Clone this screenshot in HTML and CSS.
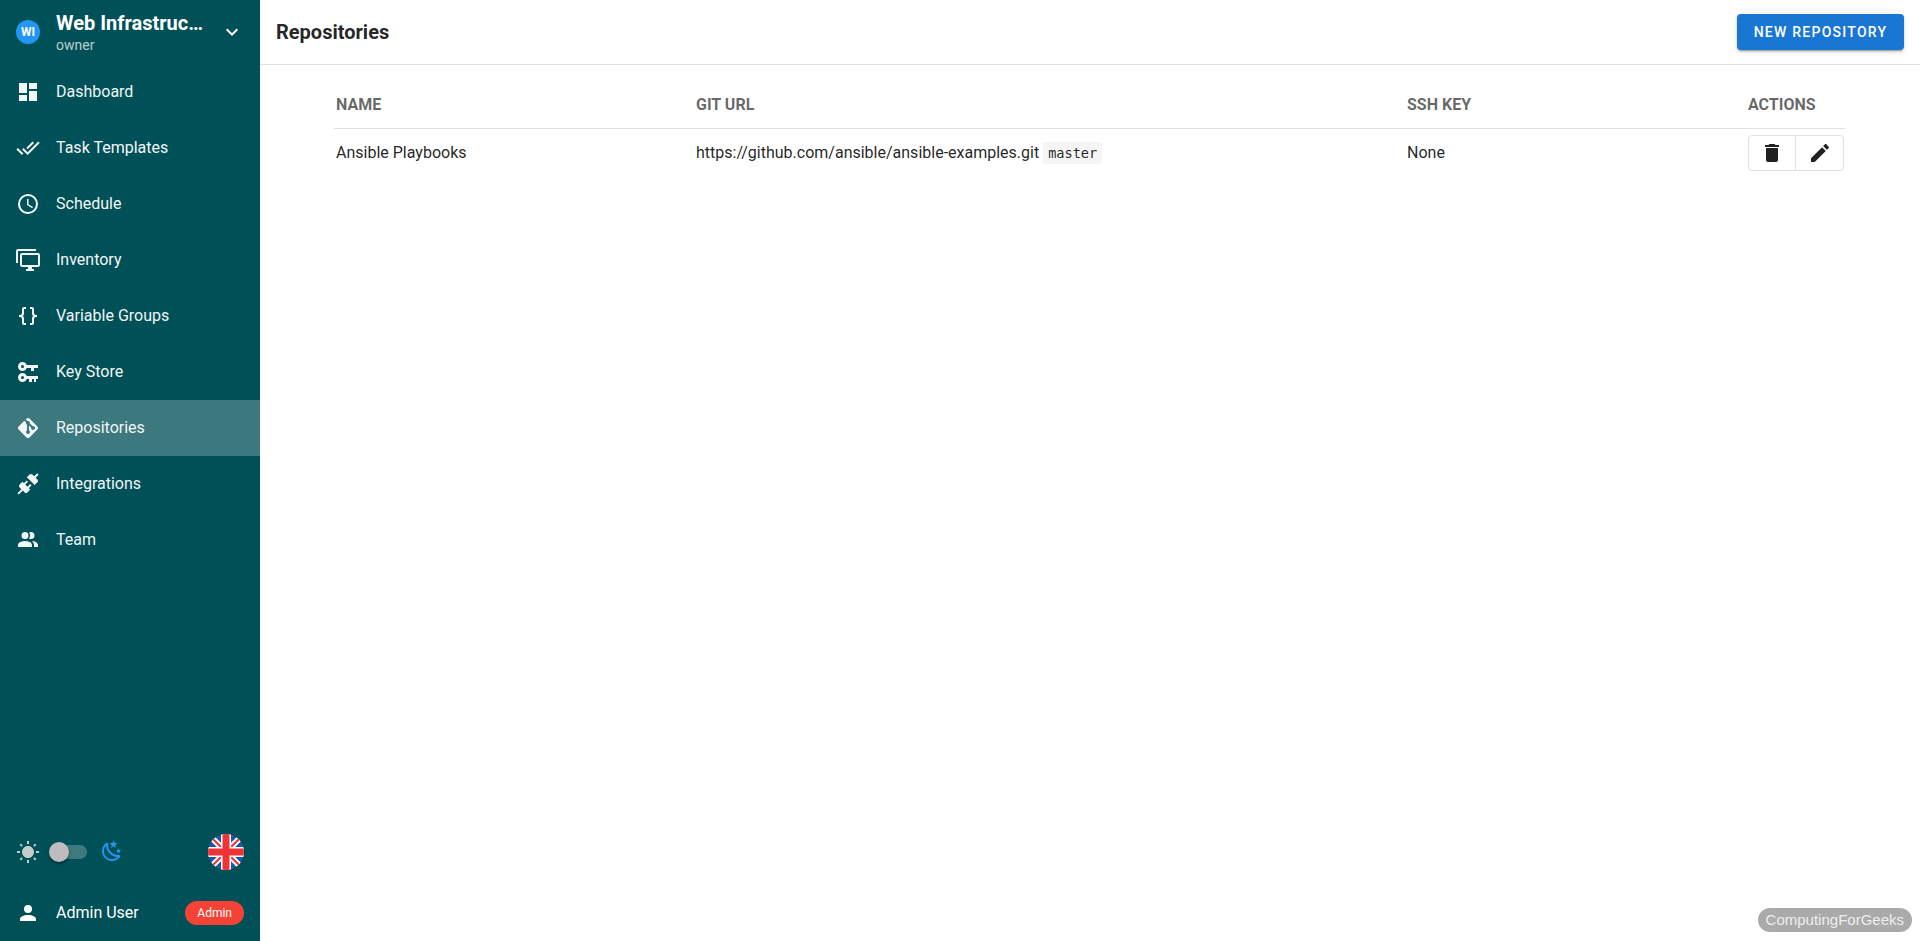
FILE: index.html
```html
<!DOCTYPE html>
<html lang="en">
<head>
  <meta charset="UTF-8">
  <title>Repositories</title>
  <link rel="stylesheet" href="styles.css">
</head>
<body>
  <aside class="sidebar">
    <div class="project">
      <div class="avatar">WI</div>
      <div class="project-text">
        <div class="project-name">Web Infrastruc…</div>
        <div class="project-role">owner</div>
      </div>
      <svg class="icon project-arrow" viewBox="0 0 24 24"><path d="M7.41,8.58L12,13.17L16.59,8.58L18,10L12,16L6,10L7.41,8.58Z"/></svg>
    </div>

    <nav class="menu">
      <a class="menu-item">
        <svg class="icon" viewBox="0 0 24 24"><path d="M13,3V9H21V3M13,21H21V11H13M3,21H11V15H3M3,13H11V3H3V13Z"/></svg>
        <span class="menu-label">Dashboard</span>
      </a>
      <a class="menu-item">
        <svg class="icon" viewBox="0 0 24 24"><path d="M0.41,13.41L6,19L7.41,17.58L1.83,12M22.24,5.58L11.66,16.17L7.5,12L6.07,13.41L11.66,19L23.66,7M18,7L16.59,5.58L10.24,11.93L11.66,13.34L18,7Z"/></svg>
        <span class="menu-label">Task Templates</span>
      </a>
      <a class="menu-item">
        <svg class="icon" viewBox="0 0 24 24"><path d="M12,20A8,8 0 0,0 20,12A8,8 0 0,0 12,4A8,8 0 0,0 4,12A8,8 0 0,0 12,20M12,2A10,10 0 0,1 22,12A10,10 0 0,1 12,22C6.47,22 2,17.5 2,12A10,10 0 0,1 12,2M12.5,7V12.25L17,14.92L16.25,16.15L11,13V7H12.5Z"/></svg>
        <span class="menu-label">Schedule</span>
      </a>
      <a class="menu-item">
        <svg class="icon" viewBox="0 0 24 24"><path d="M22,17V7H6V17H22M22,5A2,2 0 0,1 24,7V17C24,18.11 23.1,19 22,19H16V21H18V23H10V21H12V19H6C4.89,19 4,18.1 4,17V7A2,2 0 0,1 6,5H22M2,3V15H0V3A2,2 0 0,1 2,1H20V3H2Z"/></svg>
        <span class="menu-label">Inventory</span>
      </a>
      <a class="menu-item">
        <svg class="icon" viewBox="0 0 24 24"><path d="M8,3A2,2 0 0,0 6,5V9A2,2 0 0,1 4,11H3V13H4A2,2 0 0,1 6,15V19A2,2 0 0,0 8,21H10V19H8V14A2,2 0 0,0 6,12A2,2 0 0,0 8,10V5H10V3M16,3A2,2 0 0,1 18,5V9A2,2 0 0,0 20,11H21V13H20A2,2 0 0,0 18,15V19A2,2 0 0,1 16,21H14V19H16V14A2,2 0 0,1 18,12A2,2 0 0,1 16,10V5H14V3H16Z"/></svg>
        <span class="menu-label">Variable Groups</span>
      </a>
      <a class="menu-item">
        <svg class="icon" viewBox="0 0 24 24"><path d="M6.5,2C8.46,2 10.13,3.25 10.74,5H22V8H18V11H15V8H10.74C10.13,9.75 8.46,11 6.5,11C4,11 2,9 2,6.5C2,4 4,2 6.5,2M6.5,5A1.5,1.5 0 0,0 5,6.5A1.5,1.5 0 0,0 6.5,8A1.5,1.5 0 0,0 8,6.5A1.5,1.5 0 0,0 6.5,5M6.5,13C8.46,13 10.13,14.25 10.74,16H22V19H20V22H18V19H16V22H13V19H10.74C10.13,20.75 8.46,22 6.5,22C4,22 2,20 2,17.5C2,15 4,13 6.5,13M6.5,16A1.5,1.5 0 0,0 5,17.5A1.5,1.5 0 0,0 6.5,19A1.5,1.5 0 0,0 8,17.5A1.5,1.5 0 0,0 6.5,16Z"/></svg>
        <span class="menu-label">Key Store</span>
      </a>
      <a class="menu-item active">
        <svg class="icon" viewBox="0 0 24 24"><path d="M2.6,10.59L8.38,4.8L10.07,6.5C9.83,7.35 10.22,8.28 11,8.73V14.27C10.4,14.61 10,15.26 10,16A2,2 0 0,0 12,18A2,2 0 0,0 14,16C14,15.26 13.6,14.61 13,14.27V9.41L15.07,11.5C15,11.65 15,11.82 15,12A2,2 0 0,0 17,14A2,2 0 0,0 19,12A2,2 0 0,0 17,10C16.82,10 16.65,10 16.5,10.07L13.93,7.5C14.19,6.57 13.71,5.55 12.78,5.16C12.35,5 11.9,4.96 11.5,5.07L9.8,3.38L10.59,2.6C11.37,1.81 12.63,1.81 13.41,2.6L21.4,10.59C22.19,11.37 22.19,12.63 21.4,13.41L13.41,21.4C12.63,22.19 11.37,22.19 10.59,21.4L2.6,13.41C1.81,12.63 1.81,11.37 2.6,10.59Z"/></svg>
        <span class="menu-label">Repositories</span>
      </a>
      <a class="menu-item">
        <svg class="icon" viewBox="0 0 24 24"><path d="M21.4 7.5C22.2 8.3 22.2 9.6 21.4 10.3L18.6 13.1L10.8 5.3L13.6 2.5C14.4 1.7 15.7 1.7 16.4 2.5L18.2 4.3L21.2 1.3L22.6 2.7L19.6 5.7L21.4 7.5M15.6 13.3L14.2 11.9L11.4 14.7L9.3 12.6L12.1 9.8L10.7 8.4L7.9 11.2L6.4 9.8L3.6 12.6C2.8 13.4 2.8 14.7 3.6 15.4L5.4 17.2L1.4 21.2L2.8 22.6L6.8 18.6L8.6 20.4C9.4 21.2 10.7 21.2 11.4 20.4L14.2 17.6L12.8 16.2L15.6 13.3Z"/></svg>
        <span class="menu-label">Integrations</span>
      </a>
      <a class="menu-item">
        <svg class="icon" viewBox="0 0 24 24"><path d="M16 17V19H2V17S2 13 9 13 16 17 16 17M12.5 7.5A3.5 3.5 0 1 0 9 11A3.5 3.5 0 0 0 12.5 7.5M15.94 13A5.32 5.32 0 0 1 18 17V19H22V17S22 13.37 15.94 13M15 4A3.39 3.39 0 0 0 13.07 4.59A5 5 0 0 1 13.07 10.41A3.39 3.39 0 0 0 15 11A3.5 3.5 0 0 0 15 4Z"/></svg>
        <span class="menu-label">Team</span>
      </a>
    </nav>

    <div class="theme-row">
      <svg class="icon sun" viewBox="0 0 24 24"><path d="M3.55 19.09L4.96 20.5L6.76 18.71L5.34 17.29M12 6C8.69 6 6 8.69 6 12S8.69 18 12 18 18 15.31 18 12C18 8.68 15.31 6 12 6M20 13H23V11H20M17.24 18.71L19.04 20.5L20.45 19.09L18.66 17.29M20.45 5L19.04 3.6L17.24 5.39L18.66 6.81M13 1H11V4H13M6.76 5.39L4.96 3.6L3.55 5L5.34 6.81L6.76 5.39M1 13H4V11H1M13 20H11V23H13"/></svg>
      <div class="switch"><div class="switch-thumb"></div></div>
      <svg class="icon moon" viewBox="0 0 24 24"><path d="M17.75,4.09L15.22,6.03L16.13,9.09L13.5,7.28L10.87,9.09L11.78,6.03L9.25,4.09L12.44,4L13.5,1L14.56,4L17.75,4.09M21.25,11L19.61,12.25L20.2,14.23L18.5,13.06L16.8,14.23L17.39,12.25L15.75,11L17.81,10.95L18.5,9L19.19,10.95L21.25,11M18.97,15.95C19.8,15.87 20.69,17.05 20.16,17.8C19.84,18.25 19.5,18.67 19.08,19.07C15.17,23 8.84,23 4.94,19.07C1.03,15.17 1.03,8.83 4.94,4.93C5.34,4.53 5.76,4.17 6.21,3.85C6.96,3.32 8.14,4.21 8.06,5.04C7.79,7.9 8.75,10.87 10.95,13.06C13.14,15.26 16.1,16.22 18.97,15.95M17.33,17.97C14.5,17.81 11.7,16.64 9.53,14.5C7.36,12.31 6.2,9.5 6.04,6.68C3.23,9.82 3.34,14.64 6.35,17.66C9.37,20.67 14.19,20.78 17.33,17.97Z"/></svg>
      <svg class="flag" viewBox="0 0 36 36">
        <defs><clipPath id="flagClip"><circle cx="18" cy="18" r="18"/></clipPath></defs>
        <g clip-path="url(#flagClip)">
          <rect width="36" height="36" fill="#1b56a8"/>
          <path d="M0 0L36 36M36 0L0 36" stroke="#fff" stroke-width="6"/>
          <path d="M0 0L36 36M36 0L0 36" stroke="#ee3338" stroke-width="2"/>
          <path d="M18 0V36M0 18H36" stroke="#fff" stroke-width="10"/>
          <path d="M18 0V36M0 18H36" stroke="#ee3338" stroke-width="7"/>
        </g>
      </svg>
    </div>

    <div class="user-row">
      <svg class="icon" viewBox="0 0 24 24"><path d="M12,4A4,4 0 0,1 16,8A4,4 0 0,1 12,12A4,4 0 0,1 8,8A4,4 0 0,1 12,4M12,14C16.42,14 20,15.79 20,18V20H4V18C4,15.79 7.58,14 12,14Z"/></svg>
      <span class="menu-label">Admin User</span>
      <span class="chip">Admin</span>
    </div>
  </aside>

  <main class="main">
    <header class="toolbar">
      <h1 class="toolbar-title">Repositories</h1>
      <button class="new-button">New Repository</button>
    </header>

    <div class="table-wrap">
      <table class="table">
        <thead>
          <tr>
            <th class="col-name">Name</th>
            <th class="col-url">Git URL</th>
            <th class="col-key">SSH Key</th>
            <th>Actions</th>
          </tr>
        </thead>
        <tbody>
          <tr>
            <td>Ansible Playbooks</td>
            <td>https://github.com/ansible/ansible-examples.git <code class="branch">master</code></td>
            <td>None</td>
            <td>
              <div class="btn-group">
                <button class="icon-btn icon-btn-first">
                  <svg class="icon" viewBox="0 0 24 24"><path d="M19,4H15.5L14.5,3H9.5L8.5,4H5V6H19M6,19A2,2 0 0,0 8,21H16A2,2 0 0,0 18,19V7H6V19Z"/></svg>
                </button>
                <button class="icon-btn">
                  <svg class="icon" viewBox="0 0 24 24"><path d="M20.71,7.04C21.1,6.65 21.1,6 20.71,5.63L18.37,3.29C18,2.9 17.35,2.9 16.96,3.29L15.12,5.12L18.87,8.87M3,17.25V21H6.75L17.81,9.93L14.06,6.18L3,17.25Z"/></svg>
                </button>
              </div>
            </td>
          </tr>
        </tbody>
      </table>
    </div>
  </main>

  <div class="watermark">ComputingForGeeks</div>
</body>
</html>
```

FILE: styles.css
```css
* {
  box-sizing: border-box;
}

body {
  display: flex;
  height: 100vh;
  margin: 0;
  overflow: hidden;
  font-family: Roboto, sans-serif;
  font-size: 16px;
  color: rgba(0, 0, 0, 0.87);
  background-color: #fff;
}

.icon {
  display: block;
  flex: none;
  width: 24px;
  height: 24px;
  fill: currentColor;
}

/* sidebar */
.sidebar {
  display: flex;
  flex-direction: column;
  flex: none;
  width: 260px;
  color: #fff;
  background-color: #005057;
}

.project {
  display: flex;
  align-items: center;
  height: 64px;
  padding: 0 16px;
}

.avatar {
  display: flex;
  justify-content: center;
  align-items: center;
  flex: none;
  width: 24px;
  height: 24px;
  margin-right: 16px;
  border-radius: 50%;
  font-size: 12px;
  font-weight: 700;
  background-color: #2196f3;
}

.project-text {
  width: 146px;
  padding-top: 1px;
}

.project-name {
  white-space: nowrap;
  font-size: 20px;
  font-weight: 700;
  line-height: 24px;
}

.project-role {
  font-size: 14px;
  line-height: 20px;
  opacity: 0.7;
}

.project-arrow {
  margin-left: 18px;
}

.menu {
  flex: 1;
}

.menu-item {
  display: flex;
  align-items: center;
  gap: 16px;
  height: 56px;
  padding: 0 16px;
  opacity: 0.95;
}

.menu-label {
  padding-bottom: 2px;
  white-space: nowrap;
}

.menu-item.active {
  background-color: rgba(255, 255, 255, 0.25);
}

.theme-row {
  display: flex;
  align-items: center;
  height: 60px;
  padding: 0 16px 7px;
}

.sun {
  color: #c4cdce;
}

.switch {
  position: relative;
  width: 38px;
  height: 14px;
  margin-left: 9px;
  border-radius: 7px;
  background-color: rgba(255, 255, 255, 0.24);
}

.switch-thumb {
  position: absolute;
  top: -3px;
  left: 0;
  width: 20px;
  height: 20px;
  border-radius: 50%;
  background-color: #bdbdbd;
  box-shadow: 0 2px 3px rgba(0, 0, 0, 0.4);
}

.moon {
  margin-left: 13px;
  margin-bottom: 2px;
  color: #2196f3;
}

.flag {
  width: 36px;
  height: 36px;
  margin-left: auto;
}

.user-row {
  display: flex;
  align-items: center;
  gap: 16px;
  height: 56px;
  padding: 0 16px;
}

.chip {
  margin-left: auto;
  padding: 0 12px;
  border-radius: 12px;
  font-size: 12px;
  line-height: 24px;
  background-color: #f44336;
}

/* main */
.main {
  flex: 1;
  min-width: 0;
}

.toolbar {
  display: flex;
  justify-content: space-between;
  align-items: center;
  height: 65px;
  padding: 0 16px;
  border-bottom: 1px solid #e0e0e0;
}

.toolbar-title {
  margin: 0;
  font-size: 20px;
  font-weight: 700;
}

.new-button {
  width: 167px;
  height: 36px;
  padding: 0;
  border: none;
  border-radius: 4px;
  font-family: inherit;
  font-size: 14px;
  font-weight: 500;
  letter-spacing: 0.0892857em;
  text-transform: uppercase;
  color: #fff;
  background-color: #1976d2;
  box-shadow: 0 3px 1px -2px rgba(0, 0, 0, 0.2), 0 2px 2px rgba(0, 0, 0, 0.14), 0 1px 5px rgba(0, 0, 0, 0.12);
}

.table-wrap {
  padding: 15px 75px 0 74px;
}

.table {
  width: 100%;
  border-collapse: collapse;
  table-layout: fixed;
}

.table th {
  height: 48px;
  padding: 2px 2px 0;
  border-bottom: 1px solid #e0e0e0;
  font-size: 16px;
  font-weight: 700;
  text-align: left;
  text-transform: uppercase;
  color: rgba(0, 0, 0, 0.6);
}

.table td {
  height: 48px;
  padding: 0 2px;
}

.col-name {
  width: 360px;
}

.col-url {
  width: 711px;
}

.col-key {
  width: 341px;
}

.branch {
  padding: 3px 5px;
  border-radius: 3px;
  font-family: "DejaVu Sans Mono", monospace;
  font-size: 13.6px;
  background-color: #f5f5f5;
}

.btn-group {
  display: flex;
  width: 96px;
  height: 36px;
  margin-top: 2px;
  border: 1px solid #e0e0e0;
  border-radius: 4px;
}

.icon-btn {
  display: flex;
  justify-content: center;
  align-items: center;
  flex: 1;
  padding: 0;
  border: none;
  color: rgba(0, 0, 0, 0.87);
  background: none;
}

.icon-btn-first {
  flex: none;
  width: 46px;
}

.icon-btn + .icon-btn {
  border-left: 1px solid #e0e0e0;
}

.watermark {
  position: absolute;
  right: 8px;
  bottom: 9px;
  padding: 0 8px;
  border-radius: 12px;
  font-family: "Liberation Sans", sans-serif;
  font-size: 15px;
  line-height: 24px;
  color: #eee;
  background-color: #aaa;
}
```
